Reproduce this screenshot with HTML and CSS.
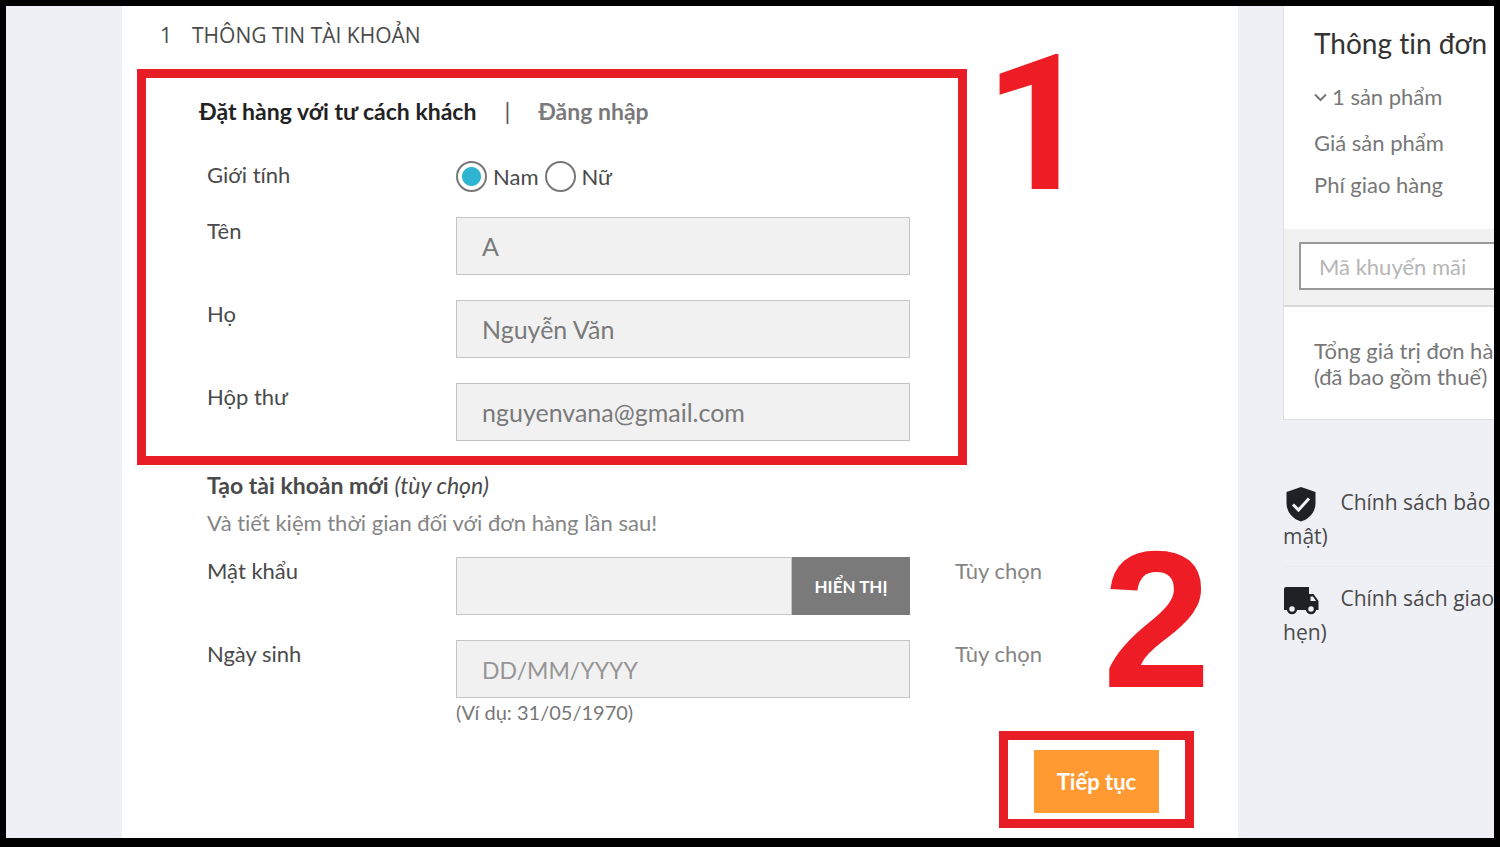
FILE: index.html
```
<!DOCTYPE html>
<html lang="vi">
<head>
  <meta charset="UTF-8">
  <title>Thông tin tài khoản</title>
  <link rel="stylesheet" href="styles.css">
</head>
<body>
<div class="page">
  <main class="checkout">
    <h1 class="checkout__title"><span>1</span>THÔNG TIN TÀI KHOẢN</h1>

    <form class="form">
      <section class="highlight highlight--guest">
        <nav class="tabs">
          <a class="tabs__link tabs__link--active" href="#guest">Đặt hàng với tư cách khách</a>
          <span class="tabs__sep">|</span>
          <a class="tabs__link" href="#login">Đăng nhập</a>
        </nav>
        <div class="row row--gender" role="radiogroup" aria-labelledby="gender-label">
          <span class="row__label" id="gender-label">Giới tính</span>
          <div class="radios">
            <input class="radio" type="radio" name="gender" id="male" checked>
            <label for="male">Nam</label>
            <input class="radio" type="radio" name="gender" id="female">
            <label for="female">Nữ</label>
          </div>
        </div>
        <div class="row">
          <label class="row__label" for="firstname">Tên</label>
          <input class="field" type="text" id="firstname" value="A">
        </div>
        <div class="row">
          <label class="row__label" for="lastname">Họ</label>
          <input class="field" type="text" id="lastname" value="Nguyễn Văn">
        </div>
        <div class="row">
          <label class="row__label" for="email">Hộp thư</label>
          <input class="field" type="email" id="email" value="nguyenvana@gmail.com">
        </div>
        <span class="step step--one">1</span>
      </section>

      <section class="account">
        <p class="account__title"><b>Tạo tài khoản mới</b> <i>(tùy chọn)</i></p>
        <p class="account__hint">Và tiết kiệm thời gian đối với đơn hàng lần sau!</p>
        <div class="row">
          <label class="row__label" for="password">Mật khẩu</label>
          <div class="password">
            <input class="field" type="password" id="password">
            <button class="password__toggle" type="button">HIỂN THỊ</button>
          </div>
          <span class="row__comment">Tùy chọn</span>
        </div>
        <div class="row">
          <label class="row__label" for="birthday">Ngày sinh</label>
          <div>
            <input class="field" type="text" id="birthday" placeholder="DD/MM/YYYY">
            <span class="row__example">(Ví dụ: 31/05/1970)</span>
          </div>
          <span class="row__comment">Tùy chọn</span>
        </div>
      </section>

      <footer class="actions">
        <div class="highlight highlight--continue">
          <button class="continue" type="submit">Tiếp tục</button>
          <span class="step step--two">2</span>
        </div>
      </footer>
    </form>
  </main>

  <aside class="sidebar">
    <section class="summary">
      <div class="summary__top">
        <h2 class="summary__title">Thông tin đơn</h2>
        <a class="summary__count" href="#products">
          <svg width="13" height="9" viewBox="0 0 13 9" aria-hidden="true"><path d="M1 1.5l5.5 5.5L12 1.5" fill="none" stroke="#777" stroke-width="2"/></svg>
          1 sản phẩm
        </a>
        <p class="summary__line">Giá sản phẩm</p>
        <p class="summary__line">Phí giao hàng</p>
      </div>
      <div class="promo">
        <input class="promo__input" type="text" placeholder="Mã khuyến mãi" aria-label="Mã khuyến mãi">
      </div>
      <p class="summary__total">Tổng giá trị đơn hàng<br>(đã bao gồm thuế)</p>
    </section>

    <ul class="policies">
      <li class="policy">
        <svg class="policy__icon" viewBox="0 0 36 36" aria-hidden="true">
          <path d="M18 1L32.500 6v11.500c0 8-6 15.500-14.500 18C9.500 33 3.500 25.500 3.500 17.500V6z" fill="#202124"/>
          <path d="M10 18.500l5.500 5.500L26 12.500" fill="none" stroke="#f2f2f6" stroke-width="3"/>
        </svg>
        Chính sách bảo<br>mật)
      </li>
      <li class="policy">
        <svg class="policy__icon" viewBox="0 0 36 36" aria-hidden="true">
          <path d="M3 5h23v7h4.500l5 7v9H1V7a2 2 0 0 1 2-2z" fill="#202124"/>
          <path d="M27.500 14.500h2.500l3 4.500h-5.500z" fill="#eff0f5"/>
          <circle cx="9" cy="27" r="4" fill="#eff0f5" stroke="#202124" stroke-width="2.500"/>
          <circle cx="28" cy="27" r="4" fill="#eff0f5" stroke="#202124" stroke-width="2.500"/>
        </svg>
        Chính sách giao<br>hẹn)
      </li>
    </ul>
  </aside>
</div>
</body>
</html>
```
FILE: styles.css
```
* {
  box-sizing: border-box;
}
body {
  margin: 0;
  font-family: Lato, "Open Sans", sans-serif;
  font-size: 22px;
  line-height: 28px;
  font-variant-ligatures: none;
  color: #4a4a4a;
}
h1, h2, p, ul {
  margin: 0;
  padding: 0;
  font-weight: normal;
}
a {
  color: inherit;
  text-decoration: none;
}
input, button {
  font-family: inherit;
  margin: 0;
}
.page {
  display: flex;
  gap: 45px;
  min-height: 100vh;
  padding-left: 116px;
  border: 6px solid #000;
  border-bottom-width: 9px;
  background: #eff0f5;
  overflow: hidden;
}

/* Main column */
.checkout {
  flex: 1;
  padding: 15px 44px 9px 15px;
  background: #fff;
}
.checkout__title {
  display: flex;
  gap: 20px;
  padding-left: 23px;
  font-family: "Open Sans", sans-serif;
  font-size: 21px;
}
.highlight {
  position: relative;
  border: 9px solid #e81e26;
}
.highlight--guest {
  width: 830px;
  margin-top: 20px;
  padding: 19px 0 15px 61px;
}
.tabs {
  display: flex;
  gap: 28px;
  margin-left: -8px;
  font-size: 23px;
  font-weight: bold;
  color: #7a7a7a;
}
.tabs__link--active {
  color: #222;
}
.tabs__sep {
  font-weight: normal;
  color: #555;
}
.row {
  display: grid;
  grid-template-columns: 249px 454px 1fr;
  margin-top: 25px;
}
.row--gender {
  margin-top: 36px;
}
.row__comment {
  padding-left: 45px;
  color: #858585;
}
.row__example {
  display: block;
  font-size: 20px;
  color: #777;
}
.radios {
  display: flex;
  align-items: center;
  gap: 6px;
  height: 31px;
}
.radio {
  appearance: none;
  width: 31px;
  height: 31px;
  border: 2px solid #777;
  border-radius: 50%;
  background: #fff;
}
.radio:checked {
  background: radial-gradient(circle, #2fb5d2 9px, #fff 10px);
}
.field {
  display: block;
  width: 100%;
  height: 58px;
  padding: 0 25px;
  border: 1px solid #c4c4c4;
  border-radius: 0;
  background: #f1f1f1;
  font-size: 25px;
  color: #7a7a7a;
}
.field::placeholder {
  font-size: 23px;
  color: #959595;
}
.password {
  display: flex;
}
.password__toggle {
  flex: 0 0 118px;
  border: 0;
  background: #7a7a7a;
  font-size: 17px;
  font-weight: bold;
  color: #fff;
}
.account {
  padding: 6px 0 0 70px;
}
.account__title {
  font-size: 23px;
}
.account__hint {
  margin-top: 10px;
  color: #858585;
}
.account__hint + .row {
  margin-top: 20px;
}
.actions {
  display: flex;
  justify-content: flex-end;
  margin-top: 5px;
}
.highlight--continue {
  padding: 10px 26px 6px;
}
.continue {
  display: block;
  width: 125px;
  height: 63px;
  border: 0;
  background: #ff9a33;
  font-size: 22px;
  font-weight: bold;
  color: #fff;
}

/* Step numbers */
.step {
  position: absolute;
  font-weight: bold;
  line-height: 190px;
  color: #ee1c24;
}
.step--one {
  top: -49px;
  left: 838px;
  font-family: Roboto, Arial, sans-serif;
  font-size: 190px;
}
.step--two {
  right: -26px;
  bottom: 105px;
  font-family: "Liberation Sans", Arial, sans-serif;
  font-size: 195px;
}

/* Sidebar */
.sidebar {
  flex: 0 0 211px;
  overflow: hidden;
  white-space: nowrap;
}
.summary {
  width: 360px;
  border: 1px solid #dedfe3;
  border-top: 0;
  background: #fff;
  color: #777;
}
.summary__top {
  height: 223px;
  padding: 23px 30px 0;
}
.summary__title {
  font-size: 28px;
  color: #333;
}
.summary__count {
  display: flex;
  align-items: center;
  gap: 5px;
  margin: 26px 0 18px;
}
.summary__line {
  margin-bottom: 14px;
}
.promo {
  padding: 13px 15px 15px;
  border-bottom: 2px solid #d8d8d8;
  background: #f1f1f1;
}
.promo__input {
  display: block;
  width: 100%;
  height: 48px;
  padding: 0 18px;
  border: 2px solid #999;
  background: #fff;
  font-size: 22px;
}
.promo__input::placeholder {
  color: #b5b5b5;
}
.summary__total {
  padding: 31px 30px 29px;
  line-height: 26px;
}
.policies {
  margin-top: 65px;
  list-style: none;
  font-family: "Open Sans", sans-serif;
  font-size: 21px;
  line-height: 34px;
}
.policy {
  padding-bottom: 13px;
}
.policy + .policy {
  padding-top: 14px;
  border-top: 1px solid #eaebf0;
}
.policy__icon {
  width: 36px;
  height: 36px;
  margin: -4px 16px -4px 0;
  vertical-align: middle;
}
```
